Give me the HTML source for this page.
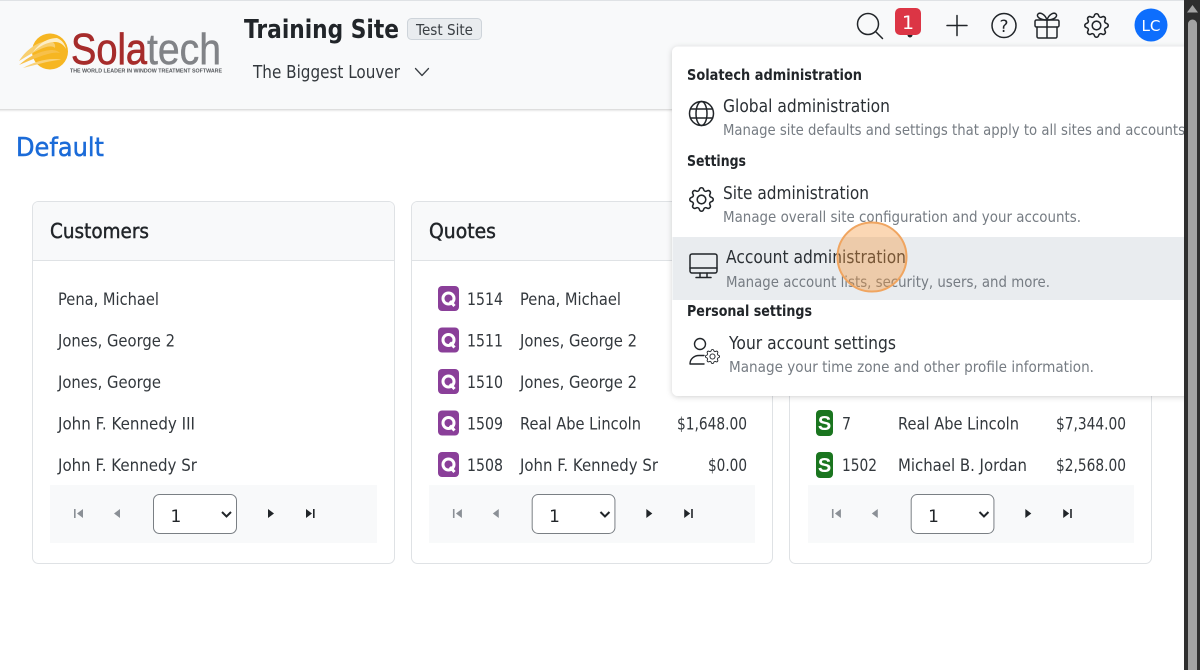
<!DOCTYPE html>
<html lang="en"><head><meta charset="utf-8"><title>Training Site</title>
<style>
html,body{margin:0;padding:0;width:1200px;height:670px;overflow:hidden;background:#fff}
svg{display:block}
text{font-family:"DejaVu Sans",sans-serif;fill:#212529;font-size:16px}
.b{font-weight:700}
.n{font-size:16.5px;fill:#33383d}
.i{font-size:17.5px;fill:#2b3035}
.d{font-size:15.5px;fill:#767c83}
.h{font-size:15.5px;font-weight:700;fill:#212529}
.c{font-size:20.5px;fill:#212529;stroke:#212529;stroke-width:.45}
.ic{fill:none;stroke:#212529;stroke-width:1.5;stroke-linecap:round;stroke-linejoin:round}
.q{font-family:"Liberation Sans",sans-serif;font-weight:700;fill:#fff;font-size:21px;text-anchor:middle}
.p{fill:#212529}.pd{fill:#8b9096}
</style></head><body>
<svg width="1200" height="670" viewBox="0 0 1200 670" xmlns="http://www.w3.org/2000/svg">
<defs>
<symbol id="gear" viewBox="0 0 16 16"><path fill="#212529" d="M8 4.754a3.246 3.246 0 1 0 0 6.492 3.246 3.246 0 0 0 0-6.492zM5.754 8a2.246 2.246 0 1 1 4.492 0 2.246 2.246 0 0 1-4.492 0z"/><path fill="#212529" d="M9.796 1.343c-.527-1.79-3.065-1.79-3.592 0l-.094.319a.873.873 0 0 1-1.255.52l-.292-.16c-1.64-.892-3.433.902-2.54 2.541l.159.292a.873.873 0 0 1-.52 1.255l-.319.094c-1.79.527-1.79 3.065 0 3.592l.319.094a.873.873 0 0 1 .52 1.255l-.16.292c-.892 1.64.901 3.434 2.541 2.54l.292-.159a.873.873 0 0 1 1.255.52l.094.319c.527 1.79 3.065 1.79 3.592 0l.094-.319a.873.873 0 0 1 1.255-.52l.292.16c1.64.893 3.434-.902 2.54-2.541l-.159-.292a.873.873 0 0 1 .52-1.255l.319-.094c1.79-.527 1.79-3.065 0-3.592l-.319-.094a.873.873 0 0 1-.52-1.255l.16-.292c.893-1.64-.902-3.433-2.541-2.54l-.292.159a.873.873 0 0 1-1.255-.52l-.094-.319zm-2.633.283c.246-.835 1.428-.835 1.674 0l.094.319a1.873 1.873 0 0 0 2.693 1.115l.291-.16c.764-.415 1.6.42 1.184 1.185l-.159.292a1.873 1.873 0 0 0 1.116 2.692l.318.094c.835.246.835 1.428 0 1.674l-.319.094a1.873 1.873 0 0 0-1.115 2.693l.16.291c.415.764-.42 1.6-1.185 1.184l-.291-.159a1.873 1.873 0 0 0-2.693 1.116l-.094.318c-.246.835-1.428.835-1.674 0l-.094-.319a1.873 1.873 0 0 0-2.692-1.115l-.292.16c-.764.415-1.6-.42-1.184-1.185l.159-.291A1.873 1.873 0 0 0 1.945 8.93l-.319-.094c-.835-.246-.835-1.428 0-1.674l.319-.094A1.873 1.873 0 0 0 3.06 4.377l-.16-.292c-.415-.764.42-1.6 1.185-1.184l.292.159a1.873 1.873 0 0 0 2.692-1.115l.094-.319z"/></symbol>
<filter id="sh" x="-10%" y="-10%" width="120%" height="120%"><feDropShadow dx="0" dy="1" stdDeviation="3" flood-color="#000" flood-opacity=".18"/></filter>
<filter id="hs" x="-2%" y="-10%" width="104%" height="130%"><feDropShadow dx="0" dy="1" stdDeviation="1.2" flood-color="#000" flood-opacity=".2"/></filter>
<symbol id="pager" viewBox="0 0 327 58" overflow="visible">
<rect width="327" height="58" fill="#f8f9fa"/>
<g class="pd"><rect x="24" y="24" width="1.6" height="9"/><path d="M33 24v9l-6-4.500z"/><path d="M70 24v9l-6-4.500z"/></g>
<g class="p"><path d="M218 24v9l6-4.500z"/><path d="M256 24v9l6-4.500z"/><rect x="263" y="24" width="1.6" height="9"/></g>
<rect x="103.500" y="9.500" width="83" height="39" rx="6" fill="#fff" stroke="#7a7f84"/>
<text x="120.500" y="37" style="font-size:17px">1</text>
<path d="M172 27l4.500 4.500 4.500-4.500" fill="none" stroke="#212529" stroke-width="2"/>
</symbol>
<symbol id="Q" viewBox="0 0 21 25"><rect width="21" height="25" rx="4" fill="#8a3f99"/><circle cx="10.500" cy="12.500" r="5.500" fill="none" stroke="#fff" stroke-width="3"/><path d="M12 15l4.500 5" stroke="#fff" stroke-width="3"/></symbol>
<symbol id="S" viewBox="0 0 17 26"><rect width="17" height="26" rx="4" fill="#1a751f"/></symbol>
</defs>

<rect width="1200" height="670" fill="#fff"/>

<!-- Header -->
<rect x="-5" y="0" width="1210" height="109" fill="#f8f9fa" filter="url(#hs)"/>
<rect x="0" y="0" width="1200" height="1" fill="#dfe2e5"/>

<!-- Logo -->
<circle cx="50" cy="51.500" r="18" fill="#f6b622"/>
<path d="M19 61C26 50 36 43 46 41c6-1 10 2 9 7-5-5-18 2-36 13z" fill="#f8cf70"/>
<path d="M19 65c9-8 20-14 32-15 4 0 7 1 9 3-8-2-22 4-41 12z" fill="#f7c04a"/>
<path d="M23 68c9-5 20-9 31-9 3 0 5 0 7 1-9 0-22 4-38 8z" fill="#f9d27a"/>
<path d="M33 52c5-7 13-14 24-14 5 2 8 6 9 11-2-4-6-7-11-7-8 0-15 4-22 10z" fill="#fdeec6"/>
<path d="M38 40c4-5 10-7 14-6-5 1-9 3-14 6z" fill="#f6b622"/>
<text x="71" y="64" style="font-family:'Liberation Sans',sans-serif;font-size:44px;fill:#a62c2b;stroke:#a62c2b;stroke-width:.7" textLength="76" lengthAdjust="spacingAndGlyphs">Sola</text>
<text x="147" y="64" style="font-family:'Liberation Sans',sans-serif;font-size:44px;fill:#818387;stroke:#818387;stroke-width:.5" textLength="74" lengthAdjust="spacingAndGlyphs">tech</text>
<text x="70" y="72.500" style="font-family:'Liberation Sans',sans-serif;font-size:5.500px;font-weight:700;fill:#55585c" textLength="152" lengthAdjust="spacingAndGlyphs">THE WORLD LEADER IN WINDOW TREATMENT SOFTWARE</text>

<text x="244" y="38" class="b" style="font-size:26px" textLength="155" lengthAdjust="spacingAndGlyphs">Training Site</text>
<rect x="407.500" y="18.500" width="74" height="21" rx="4" fill="#e9ecef" stroke="#ced4da"/>
<text x="416" y="35" style="font-size:15.500px;fill:#3a3f44" textLength="57" lengthAdjust="spacingAndGlyphs">Test Site</text>
<text x="253" y="78" style="font-size:17.500px;fill:#33383d" textLength="147" lengthAdjust="spacingAndGlyphs">The Biggest Louver</text>
<path d="M415.500 68.500l6.500 7 6.500-7" class="ic" style="stroke:#3a3f44;stroke-width:1.300"/>

<!-- Top icons -->
<circle cx="868" cy="24" r="10.500" class="ic"/><path d="M876 32l6.500 6.500" class="ic"/>
<circle cx="910" cy="35" r="2.500" fill="#212529"/>
<rect x="895" y="8" width="26" height="27" rx="5" fill="#dc3545"/>
<text x="908" y="29" style="font-size:19px;fill:#fff;text-anchor:middle">1</text>
<path d="M957 15.500v20M947 25.500h20" class="ic"/>
<circle cx="1004" cy="25.500" r="12" class="ic"/>
<text x="1004" y="32" style="font-size:17px;text-anchor:middle;fill:#212529">?</text>
<g class="ic"><rect x="1035" y="20" width="24" height="7" rx="1.500"/><path d="M1037 27v9.500a1.500 1.500 0 0 0 1.500 1.500h17a1.500 1.500 0 0 0 1.500-1.500V27M1047 20v18M1047 20c-2-6-7-8-9-6s1 6 9 6zM1047 20c2-6 7-8 9-6s-1 6-9 6z"/></g>
<use href="#gear" x="1084" y="13" width="25" height="25"/>
<circle cx="1151" cy="25" r="16.500" fill="#0d6efd"/>
<text x="1151" y="31" style="font-size:15.500px;fill:#fff;text-anchor:middle" textLength="19" lengthAdjust="spacingAndGlyphs">LC</text>

<text x="16" y="156" style="font-size:26px;fill:#1b6bd8;stroke:#1b6bd8;stroke-width:.5" textLength="88" lengthAdjust="spacingAndGlyphs">Default</text>

<!-- Customers -->
<rect x="32.500" y="201.500" width="362" height="362" rx="6" fill="#fff" stroke="#dfe2e5"/>
<path d="M33 260V207a5 5 0 0 1 5-5H389a5 5 0 0 1 5 5V260z" fill="#f8f9fa"/><rect x="33" y="260" width="361" height="1" fill="#dfe2e5"/>
<text x="50" y="238" class="c" textLength="99" lengthAdjust="spacingAndGlyphs">Customers</text>
<text x="58" y="305" class="n" textLength="101" lengthAdjust="spacingAndGlyphs">Pena, Michael</text>
<text x="58" y="346.500" class="n" textLength="117" lengthAdjust="spacingAndGlyphs">Jones, George 2</text>
<text x="58" y="388" class="n" textLength="103" lengthAdjust="spacingAndGlyphs">Jones, George</text>
<text x="58" y="429.500" class="n" textLength="137" lengthAdjust="spacingAndGlyphs">John F. Kennedy III</text>
<text x="58" y="471" class="n" textLength="139" lengthAdjust="spacingAndGlyphs">John F. Kennedy Sr</text>
<use href="#pager" x="50" y="485" width="327" height="58"/>

<!-- Quotes -->
<rect x="411.500" y="201.500" width="361" height="362" rx="6" fill="#fff" stroke="#dfe2e5"/>
<path d="M412 260V207a5 5 0 0 1 5-5H767a5 5 0 0 1 5 5V260z" fill="#f8f9fa"/><rect x="412" y="260" width="360" height="1" fill="#dfe2e5"/>
<text x="429" y="238" class="c" textLength="67" lengthAdjust="spacingAndGlyphs">Quotes</text>
<use href="#Q" x="438" y="286" width="21" height="25"/>
<use href="#Q" x="438" y="327.500" width="21" height="25"/>
<use href="#Q" x="438" y="369" width="21" height="25"/>
<use href="#Q" x="438" y="410.500" width="21" height="25"/>
<use href="#Q" x="438" y="452" width="21" height="25"/>
<text x="467" y="305" class="n" textLength="36" lengthAdjust="spacingAndGlyphs">1514</text>
<text x="467" y="346.500" class="n" textLength="36" lengthAdjust="spacingAndGlyphs">1511</text>
<text x="467" y="388" class="n" textLength="36" lengthAdjust="spacingAndGlyphs">1510</text>
<text x="467" y="429.500" class="n" textLength="36" lengthAdjust="spacingAndGlyphs">1509</text>
<text x="467" y="471" class="n" textLength="36" lengthAdjust="spacingAndGlyphs">1508</text>
<text x="520" y="305" class="n" textLength="101" lengthAdjust="spacingAndGlyphs">Pena, Michael</text>
<text x="520" y="346.500" class="n" textLength="117" lengthAdjust="spacingAndGlyphs">Jones, George 2</text>
<text x="520" y="388" class="n" textLength="117" lengthAdjust="spacingAndGlyphs">Jones, George 2</text>
<text x="520" y="429.500" class="n" textLength="121" lengthAdjust="spacingAndGlyphs">Real Abe Lincoln</text>
<text x="520" y="471" class="n" textLength="138" lengthAdjust="spacingAndGlyphs">John F. Kennedy Sr</text>
<text x="677" y="429.500" class="n" textLength="70" lengthAdjust="spacingAndGlyphs">$1,648.00</text>
<text x="708" y="471" class="n" textLength="39" lengthAdjust="spacingAndGlyphs">$0.00</text>
<use href="#pager" x="429" y="485" width="326" height="58"/>

<!-- Third card -->
<rect x="789.500" y="201.500" width="362" height="362" rx="6" fill="#fff" stroke="#dfe2e5"/>
<use href="#S" x="816" y="410" width="17" height="26"/>
<text x="824.500" y="430" class="q" style="font-size:20px">S</text>
<use href="#S" x="816" y="452" width="17" height="26"/>
<text x="824.500" y="472" class="q" style="font-size:20px">S</text>
<text x="842" y="429.500" class="n" textLength="9" lengthAdjust="spacingAndGlyphs">7</text>
<text x="842" y="471" class="n" textLength="35" lengthAdjust="spacingAndGlyphs">1502</text>
<text x="898" y="429.500" class="n" textLength="121" lengthAdjust="spacingAndGlyphs">Real Abe Lincoln</text>
<text x="898" y="471" class="n" textLength="129" lengthAdjust="spacingAndGlyphs">Michael B. Jordan</text>
<text x="1056" y="429.500" class="n" textLength="70" lengthAdjust="spacingAndGlyphs">$7,344.00</text>
<text x="1056" y="471" class="n" textLength="70" lengthAdjust="spacingAndGlyphs">$2,568.00</text>
<use href="#pager" x="808" y="485" width="326" height="58"/>

<!-- Dropdown -->
<rect x="672" y="46.500" width="530" height="349.500" rx="6" fill="#fff" filter="url(#sh)"/>
<rect x="672.500" y="237" width="512" height="63" fill="#e9ecef"/>

<text x="687" y="80" class="h" textLength="175" lengthAdjust="spacingAndGlyphs">Solatech administration</text>
<g class="ic"><circle cx="701.500" cy="113.500" r="12"/><ellipse cx="701.500" cy="113.500" rx="5.500" ry="12"/><path d="M690.500 109h22M690.500 118h22"/></g>
<text x="723" y="112" class="i" textLength="167" lengthAdjust="spacingAndGlyphs">Global administration</text>
<text x="723" y="135" class="d" textLength="462" lengthAdjust="spacingAndGlyphs">Manage site defaults and settings that apply to all sites and accounts</text>

<text x="687" y="166" class="h" textLength="59" lengthAdjust="spacingAndGlyphs">Settings</text>
<use href="#gear" x="689" y="187" width="25" height="25"/>
<text x="723" y="199" class="i" textLength="146" lengthAdjust="spacingAndGlyphs">Site administration</text>
<text x="723" y="222" class="d" textLength="358" lengthAdjust="spacingAndGlyphs">Manage overall site configuration and your accounts.</text>

<g class="ic"><rect x="690" y="254" width="27" height="19" rx="2"/><path d="M690 268h27M700 273v4M707 273v4M696 277.500h15"/></g>
<text x="726" y="263" class="i" textLength="180" lengthAdjust="spacingAndGlyphs">Account administration</text>
<text x="726" y="287" class="d" textLength="324" lengthAdjust="spacingAndGlyphs">Manage account lists, security, users, and more.</text>

<text x="687" y="316" class="h" textLength="125" lengthAdjust="spacingAndGlyphs">Personal settings</text>
<g class="ic" style="stroke-width:1.400"><circle cx="700" cy="344" r="5.500"/><path d="M690 364c0-5 4-8.500 9-8.500h5M690 364h14"/></g>
<use href="#gear" x="705" y="349" width="15" height="15"/>
<text x="729" y="349" class="i" textLength="167" lengthAdjust="spacingAndGlyphs">Your account settings</text>
<text x="729" y="372" class="d" textLength="365" lengthAdjust="spacingAndGlyphs">Manage your time zone and other profile information.</text>

<!-- Click highlight -->
<circle cx="872" cy="257" r="34.500" fill="#f5973a" fill-opacity=".38" stroke="#f0a560" stroke-width="2"/>

<!-- Scrollbar -->
<rect x="1184" y="0" width="16" height="670" fill="#2e2e2e"/>
<path d="M1187 12.500l5.500-7.500 5.500 7.500z" fill="#a3a3a3"/>
<path d="M1188 670V24a4.500 4.500 0 0 1 9 0V670z" fill="#a3a3a3"/>
</svg>
</body></html>
